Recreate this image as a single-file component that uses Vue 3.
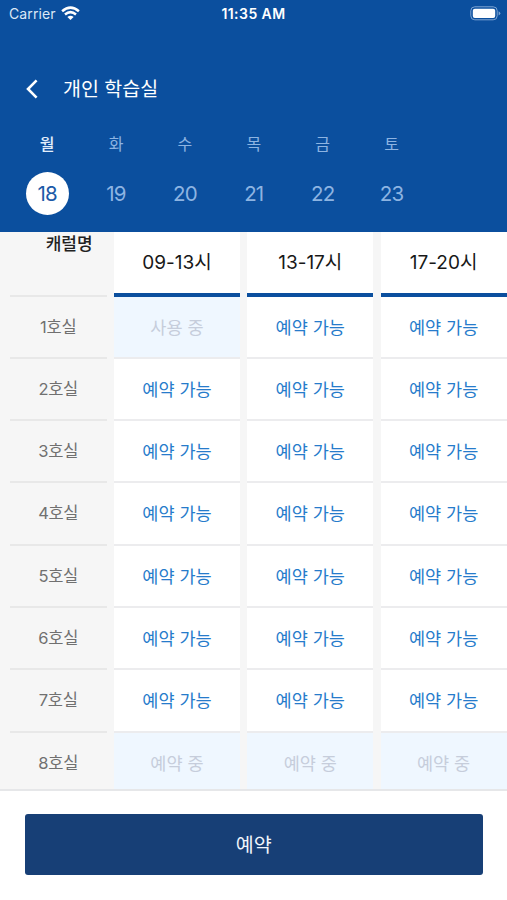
<script setup>
const days = [
  { name: '월', date: 18, active: true },
  { name: '화', date: 19 },
  { name: '수', date: 20 },
  { name: '목', date: 21 },
  { name: '금', date: 22 },
  { name: '토', date: 23 },
]

const rooms = Array.from({ length: 8 }, (_, i) => `${i + 1}호실`)
const open = '예약 가능'
const slots = [
  { time: '09-13시', cells: ['사용 중', open, open, open, open, open, open, '예약 중'] },
  { time: '13-17시', cells: [open, open, open, open, open, open, open, '예약 중'] },
  { time: '17-20시', cells: [open, open, open, open, open, open, open, '예약 중'] },
]
</script>

<template>
  <div class="screen">
    <header class="header">
      <div class="status">
        <div class="carrier">
          <span>Carrier</span>
          <svg class="wifi" width="19" height="15" viewBox="0 0 19 15">
            <path d="M1.1 5.2Q9.5 -2 17.9 5.2M4 8.5Q9.5 3.8 15 8.5" fill="none" stroke="#fff" stroke-width="2.5" />
            <path d="M6.4 11Q9.5 8.4 12.6 11L9.5 14.1Z" fill="#fff" />
          </svg>
        </div>
        <div class="clock">11:35 AM</div>
        <div class="power">
          <svg width="31" height="15" viewBox="0 0 31 15">
            <rect x="0.8" y="0.8" width="26.4" height="13" rx="4" fill="none" stroke="#7fa5d3" stroke-width="1" />
            <rect x="2.8" y="2.8" width="22.4" height="9.2" rx="2" fill="#fff" />
            <path d="M28.6 5.2Q30.3 6 30.3 7.3T28.6 9.4Z" fill="#7fa5d3" />
          </svg>
        </div>
      </div>
      <div class="titlebar">
        <svg class="back" width="12" height="20" viewBox="0 0 12 20">
          <path d="M10.6 1.4L2 10L10.6 18.6" fill="none" stroke="#fff" stroke-width="2.6" />
        </svg>
        <h1 class="title">개인 학습실</h1>
      </div>
      <nav class="days">
        <div v-for="day in days" :key="day.date" class="day" :class="{ active: day.active }">
          <span class="name">{{ day.name }}</span>
          <span class="date">{{ day.date }}</span>
        </div>
      </nav>
    </header>

    <main class="table">
      <div class="rooms">
        <div class="corner">캐럴명</div>
        <div v-for="room in rooms" :key="room" class="room">{{ room }}</div>
      </div>
      <div v-for="slot in slots" :key="slot.time" class="slot">
        <div class="time">{{ slot.time }}</div>
        <div v-for="(cell, i) in slot.cells" :key="i" class="cell" :class="{ taken: cell !== open }">{{ cell }}</div>
      </div>
    </main>

    <footer class="footer">
      <button class="reserve">예약</button>
    </footer>
  </div>
</template>

<style>
body {
  margin: 0;
}
</style>

<style scoped>
.screen {
  width: 507px;
  height: 900px;
  display: flex;
  flex-direction: column;
  overflow: hidden;
  background: #fff;
  font-family: Inter, "Noto Sans CJK KR", sans-serif;
}
.header {
  box-sizing: border-box;
  height: 232px;
  flex: none;
  background: #0b4f9e;
  color: #fff;
}
.status {
  height: 28px;
  display: grid;
  grid-template-columns: 1fr auto 1fr;
  align-items: center;
  padding: 0 6px 0 9px;
  font-size: 14px;
  line-height: 28px;
}
.carrier {
  display: flex;
  align-items: center;
  gap: 5px;
  color: #dce8f6;
  letter-spacing: 0.1px;
}
.wifi {
  margin-top: -2px;
}
.clock {
  font-weight: 600;
  font-size: 14px;
  letter-spacing: 0.45px;
  margin-right: 3px;
}
.power {
  display: flex;
  justify-content: flex-end;
  margin-top: -2px;
}
.titlebar {
  display: flex;
  align-items: center;
  height: 40px;
  padding: 41px 0 0 26px;
  gap: 25px;
}
.title {
  margin: 0;
  font-size: 19.5px;
  font-weight: 400;
  line-height: 40px;
}
.days {
  display: flex;
  padding: 22px 0 0 12.7px;
}
.day {
  width: 68.9px;
  display: flex;
  flex-direction: column;
  align-items: center;
  color: #8db4e2;
}
.name {
  font-size: 16px;
  line-height: 26px;
}
.date {
  width: 43px;
  height: 43px;
  margin-top: 15px;
  border-radius: 50%;
  font-size: 20.5px;
  letter-spacing: -0.8px;
  line-height: 43px;
  text-align: center;
}
.active .name {
  color: #e3eefb;
  font-weight: 500;
}
.active .date {
  background: #fff;
  color: #1d5aa8;
}
.table {
  box-sizing: border-box;
  height: 558.5px;
  flex: none;
  display: grid;
  grid-template-columns: 97px 126px 126px 127px;
  column-gap: 7.3px;
  padding-left: 9.7px;
  overflow: hidden;
  background: #f6f6f6;
  border-bottom: 2px solid #e6e7e9;
}
.corner,
.room,
.time,
.cell {
  box-sizing: border-box;
  text-align: center;
}
.corner {
  height: 64.5px;
  padding-left: 22px;
  border-bottom: 2px solid #e8e8e8;
  font-size: 17px;
  font-weight: 500;
  line-height: 24px;
  color: #222;
}
.room {
  height: 62.3px;
  border-bottom: 2px solid #e8e8e8;
  font-size: 16.5px;
  letter-spacing: -0.3px;
  line-height: 61.4px;
  color: #707070;
}
.slot {
  background: #fff;
}
.time {
  height: 64.5px;
  border-bottom: 4px solid #0b4f9e;
  font-size: 19px;
  line-height: 62px;
  color: #181818;
}
.cell {
  height: 62.3px;
  border-bottom: 2px solid #ececee;
  font-size: 17.5px;
  line-height: 61.4px;
  color: #267bcb;
}
.slot:last-child .time,
.slot:last-child .cell {
  padding-right: 1px;
}
.taken {
  background: #eff7ff;
  color: #c6cddb;
}
.footer {
  padding: 23.8px 24.5px 0 25px;
}
.reserve {
  display: block;
  width: 100%;
  height: 61px;
  padding: 0;
  border: 0;
  border-radius: 3px;
  background: #173f76;
  color: #f0f5fc;
  font: inherit;
  font-size: 19.5px;
  line-height: 62px;
}
</style>
